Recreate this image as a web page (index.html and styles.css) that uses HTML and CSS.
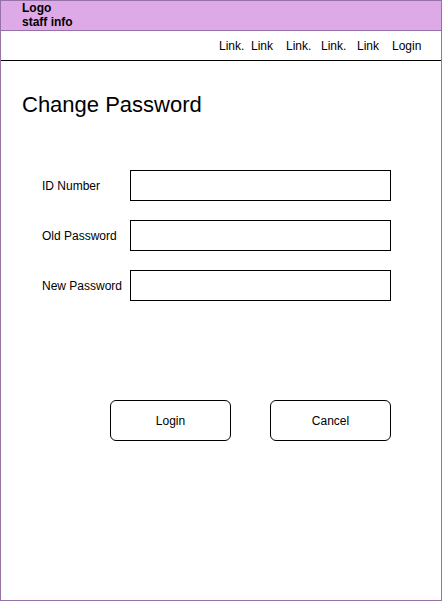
FILE: index.html
```html
<!DOCTYPE html>
<html>
<head>
<meta charset="utf-8">
<link rel="stylesheet" href="styles.css">
</head>
<body>
<div class="frame">
  <header class="header">
    <div class="brand">Logo<br>staff info</div>
  </header>
  <nav class="nav">
    <a class="nav-link">Link.</a>
    <a class="nav-link">Link</a>
    <a class="nav-link">Link.</a>
    <a class="nav-link">Link.</a>
    <a class="nav-link">Link</a>
    <a class="nav-link">Login</a>
  </nav>
  <main class="main">
    <h1 class="title">Change Password</h1>
    <form class="form">
      <label class="label">ID Number</label>
      <input class="field" type="text">
      <label class="label">Old Password</label>
      <input class="field" type="password">
      <label class="label">New Password</label>
      <input class="field" type="password">
    </form>
    <div class="actions">
      <button class="btn" type="button">Login</button>
      <button class="btn" type="button">Cancel</button>
    </div>
  </main>
</div>
</body>
</html>
```

FILE: styles.css
```css
* { box-sizing: border-box; }
html, body { margin: 0; padding: 0; background: #fff; }
body { font-family: "Liberation Sans", Arial, sans-serif; color: #000; }

.frame {
  width: 442px;
  height: 601px;
  border: 1px solid #9673a6;
  display: flex;
  flex-direction: column;
}

.header {
  height: 30px;
  background: #dda9e6;
  border-bottom: 1px solid #9673a6;
  padding: 1px 0 0 21px;
}
.brand {
  font-size: 12px;
  font-weight: bold;
  line-height: 13.5px;
}

.nav {
  height: 30px;
  border-bottom: 1px solid #000;
  display: grid;
  grid-template-columns: 32px 35px 35px 36px 35px 30px;
  justify-content: end;
  align-items: center;
  padding-right: 19px;
  font-size: 12px;
  line-height: 14px;
}
.nav-link { color: #000; text-decoration: none; white-space: nowrap; }

.main { padding: 31px 0 0 0; }
.title {
  margin: 0 0 52px 21px;
  font-size: 22px;
  font-weight: normal;
  line-height: 26px;
}

.form {
  display: grid;
  grid-template-columns: 88px 261px;
  row-gap: 19px;
  align-items: center;
  padding-left: 41px;
  margin: 0;
}
.label { font-size: 12px; line-height: 14px; }
.field {
  width: 261px;
  height: 31px;
  border: 1px solid #000;
  border-radius: 0;
  margin: 0;
  padding: 0 6px;
  background: #fff;
  outline: none;
}

.actions {
  display: flex;
  gap: 39px;
  padding-left: 109px;
  margin-top: 99px;
}
.btn {
  width: 121px;
  height: 41px;
  border: 1px solid #000;
  border-radius: 6px;
  background: #fff;
  font-family: "Liberation Sans", Arial, sans-serif;
  font-size: 12px;
  color: #000;
  padding: 0;
}
```
